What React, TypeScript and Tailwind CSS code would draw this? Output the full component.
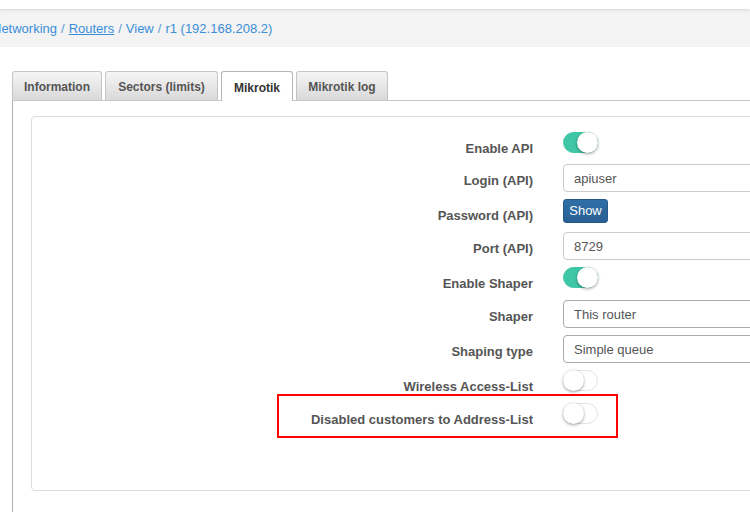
import * as React from "react"

type Row =
    | { label: string; kind: "toggle"; on: boolean; h: string }
    | { label: string; kind: "input"; value: string; h: string; dark?: boolean }
    | { label: string; kind: "button"; h: string }

const ROWS: Row[] = [
    { label: "Enable API", kind: "toggle", on: true, h: "h-[32px]" },
    { label: "Login (API)", kind: "input", value: "apiuser", h: "h-[35px]" },
    { label: "Password (API)", kind: "button", h: "h-[33px]" },
    { label: "Port (API)", kind: "input", value: "8729", h: "h-[35px]" },
    { label: "Enable Shaper", kind: "toggle", on: true, h: "h-[33px]" },
    { label: "Shaper", kind: "input", value: "This router", h: "h-[35px]", dark: true },
    { label: "Shaping type", kind: "input", value: "Simple queue", h: "h-[35px]", dark: true },
    { label: "Wireless Access-List", kind: "toggle", on: false, h: "h-[33px]" },
    { label: "Disabled customers to Address-List", kind: "toggle", on: false, h: "h-[33px]" },
]

const TABS = [
    { name: "Information", w: "w-[90px]", active: false },
    { name: "Sectors (limits)", w: "w-[113px]", active: false },
    { name: "Mikrotik", w: "w-[72px]", active: true },
    { name: "Mikrotik log", w: "w-[92px]", active: false },
]

function Toggle({ on }: { on: boolean }) {
    return (
        <div
            className={`relative h-[21px] w-[35px] rounded-full border ${on ? "border-[#3fc6a6] bg-[#3fc6a6]" : "border-[#e3e3e3] bg-white"}`}
        >
            <div
                className={`absolute top-[-1px] h-[21px] w-[21px] rounded-full bg-white shadow-[0_1px_3px_rgba(0,0,0,0.4)] ${on ? "right-[-1px]" : "left-[-1px]"}`}
            />
        </div>
    )
}

export default function App() {
    return (
        <div className="relative h-[512px] w-[750px] overflow-hidden bg-white font-['Liberation_Sans',Arial,sans-serif]">
            {/* top bar */}
            <div className="relative z-10 h-[9px] bg-white shadow-[0_1px_3px_rgba(0,0,0,0.12)]" />

            {/* breadcrumb */}
            <div className="flex h-[38px] items-center bg-[#f3f3f4] text-[13px] text-[#3b8ed8]">
                <div className="ml-[-8px] mt-[1px] flex gap-[4px] whitespace-nowrap">
                    <span>Networking</span>
                    <span className="text-[#5d9ad2]">/</span>
                    <span className="underline">Routers</span>
                    <span className="text-[#5d9ad2]">/</span>
                    <span>View</span>
                    <span className="text-[#5d9ad2]">/</span>
                    <span>r1 (192.168.208.2)</span>
                </div>
            </div>

            {/* tabs */}
            <div className="pl-[12px] pt-[24px]">
                <div className="flex items-end gap-[3px]">
                    {TABS.map((t, i) => (
                        <div
                            key={i}
                            className={`${t.w} relative z-10 flex h-[29px] items-center justify-center rounded-t-[3px] border border-b-0 pt-[2px] text-[12px] font-bold ${
                                t.active
                                    ? "mb-[-1px] h-[30px] border-[#b5b5b5] bg-white text-[#333]"
                                    : "border-[#c5c5c5] bg-gradient-to-b from-[#f5f5f5] to-[#d9d9d9] text-[#555]"
                            }`}
                        >
                            {t.name}
                        </div>
                    ))}
                </div>

                {/* tab content */}
                <div className="h-[420px] w-[900px] border-l border-t border-l-[#b0b0b0] border-t-[#c8c8c8] pl-[18px] pt-[15px]">
                    <div className="h-[375px] rounded-[4px] border border-[#dcdcdc] pt-[15px]">
                        {ROWS.map((r, i) => (
                            <div key={i} className={`flex items-start ${r.h}`}>
                                <div className="w-[501px] pt-[7px] text-right text-[13px] font-bold leading-[19px] text-[#555]">
                                    {r.label}
                                </div>
                                <div className="ml-[30px] flex-1">
                                    {r.kind === "toggle" && <Toggle on={r.on} />}
                                    {r.kind === "input" && (
                                        <div
                                            className={`flex h-[28px] items-center rounded-[4px] border pl-[10px] pt-[2px] text-[13px] text-[#555] ${r.dark ? "border-[#aaa]" : "border-[#ccc]"}`}
                                        >
                                            {r.value}
                                        </div>
                                    )}
                                    {r.kind === "button" && (
                                        <div className="flex h-[24px] w-[45px] items-center justify-center rounded-[3px] border border-[#245a8a] bg-gradient-to-b from-[#2f6fa8] to-[#285f92] text-[13px] text-white">
                                            Show
                                        </div>
                                    )}
                                </div>
                            </div>
                        ))}
                    </div>
                </div>
            </div>

            {/* highlight box */}
            <div className="absolute left-[277px] top-[394px] h-[44px] w-[341px] border-2 border-[#f00]" />
        </div>
    )
}
